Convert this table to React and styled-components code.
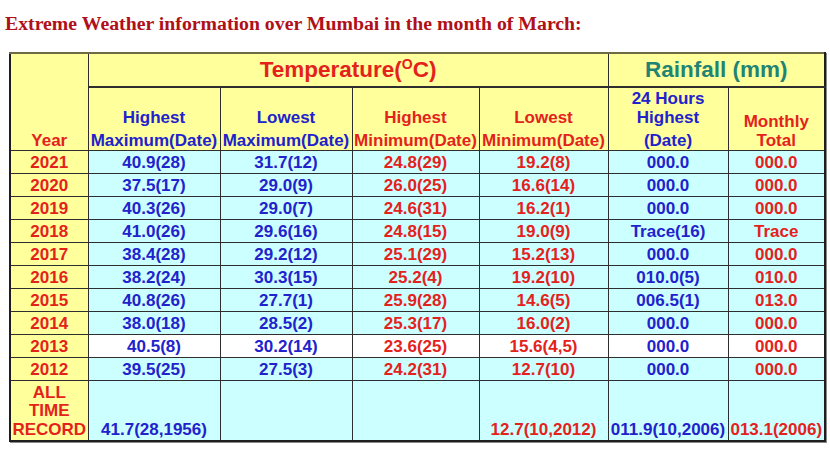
import React from 'react';
import styled, { createGlobalStyle } from 'styled-components';

const RED = '#e4221c';
const BLUE = '#2222cc';
const TEAL = '#1f8474';
const YELLOW = '#ffff9c';
const CYAN = '#ccffff';
const LINE = '#2e2e2e';

const rows = [
  ['2021', '40.9(28)', '31.7(12)', '24.8(29)', '19.2(8)', '000.0', '000.0'],
  ['2020', '37.5(17)', '29.0(9)', '26.0(25)', '16.6(14)', '000.0', '000.0'],
  ['2019', '40.3(26)', '29.0(7)', '24.6(31)', '16.2(1)', '000.0', '000.0'],
  ['2018', '41.0(26)', '29.6(16)', '24.8(15)', '19.0(9)', 'Trace(16)', 'Trace'],
  ['2017', '38.4(28)', '29.2(12)', '25.1(29)', '15.2(13)', '000.0', '000.0'],
  ['2016', '38.2(24)', '30.3(15)', '25.2(4)', '19.2(10)', '010.0(5)', '010.0'],
  ['2015', '40.8(26)', '27.7(1)', '25.9(28)', '14.6(5)', '006.5(1)', '013.0'],
  ['2014', '38.0(18)', '28.5(2)', '25.3(17)', '16.0(2)', '000.0', '000.0'],
  ['2013', '40.5(8)', '30.2(14)', '23.6(25)', '15.6(4,5)', '000.0', '000.0', true],
  ['2012', '39.5(25)', '27.5(3)', '24.2(31)', '12.7(10)', '000.0', '000.0'],
];

// colour of each value column, after the year
const tones = [BLUE, BLUE, RED, RED, BLUE, RED];

const GlobalStyle = createGlobalStyle`
  body {
    margin: 0;
    background: #fff;
    font-family: 'Liberation Sans', Arial, sans-serif;
  }
`;

const Page = styled.div`
  width: 830px;
  height: 455px;
  padding: 12px 0 0 5px;
  box-sizing: border-box;
`;

const Title = styled.h1`
  margin: 0 0 18px;
  font-family: 'Liberation Serif', 'Times New Roman', serif;
  font-weight: 700;
  font-size: 19.8px;
  line-height: 22px;
  color: #b01018;
`;

const Table = styled.table`
  margin-left: 4px;
  width: 815px;
  table-layout: fixed;
  border-collapse: collapse;
  border: 2px solid #1e1e1e;
  border-top-color: #6e6a44;
  font-weight: 700;
  font-size: 17px;
  text-align: center;
  box-shadow: 1px 1px 0 #8a8a8a;
`;

const Cell = styled.td`
  border: 1px solid ${LINE};
  padding: 0;
  white-space: nowrap;
  color: ${p => p.$tone || RED};
  background: ${p => (p.$yellow ? YELLOW : p.$white ? '#fff' : CYAN)};
  height: ${p => p.$h || 22}px;
  line-height: 19px;
  vertical-align: ${p => p.$align || 'middle'};
  overflow: visible;
`;

const GroupHead = styled.th`
  border: 1px solid ${LINE};
  border-bottom-width: 2px;
  background: ${YELLOW};
  color: ${p => p.$tone};
  font-size: 22.5px;
  height: 32px;
  padding: 0;
  vertical-align: middle;

  sup {
    font-size: 14px;
    vertical-align: 8px;
    line-height: 0;
  }
`;

const ColHead = styled.th`
  border: 1px solid ${LINE};
  background: ${YELLOW};
  color: ${p => p.$tone};
  height: 62px;
  padding: 0;
  vertical-align: bottom;
  white-space: nowrap;
  line-height: 19px;
  overflow: visible;
`;

const HeadLine = styled.div`
  margin-top: ${p => p.$gap || 0}px;
`;

const RecordLines = styled.div`
  line-height: 18.5px;
  padding-bottom: 1px;
`;

const head = [
  { lines: ['Highest', 'Maximum(Date)'], tone: BLUE, gap: 4.5 },
  { lines: ['Lowest', 'Maximum(Date)'], tone: BLUE, gap: 4.5 },
  { lines: ['Highest', 'Minimum(Date)'], tone: RED, gap: 4.5 },
  { lines: ['Lowest', 'Minimum(Date)'], tone: RED, gap: 4.5 },
  { lines: ['24 Hours', 'Highest', '(Date)'], tone: BLUE, gap: 4.5 },
  { lines: ['Monthly', 'Total'], tone: RED, gap: 0 },
];

export default function App() {
  return (
    <Page>
      <GlobalStyle />
      <Title>Extreme Weather information over Mumbai in the month of March:</Title>
      <Table>
        <colgroup>
          <col style={{ width: 78 }} />
          <col style={{ width: 132 }} />
          <col style={{ width: 132 }} />
          <col style={{ width: 127 }} />
          <col style={{ width: 129 }} />
          <col style={{ width: 120 }} />
          <col style={{ width: 97 }} />
        </colgroup>
        <thead>
          <tr>
            <ColHead rowSpan={2} $tone={RED}>Year</ColHead>
            <GroupHead colSpan={4} $tone={RED}>
              Temperature(<sup>O</sup>C)
            </GroupHead>
            <GroupHead colSpan={2} $tone={TEAL}>Rainfall (mm)</GroupHead>
          </tr>
          <tr>
            {head.map((h, i) => (
              <ColHead key={i} $tone={h.tone}>
                {h.lines.map((l, j) => (
                  <HeadLine key={j} $gap={j === h.lines.length - 1 ? h.gap : 0}>{l}</HeadLine>
                ))}
              </ColHead>
            ))}
          </tr>
        </thead>
        <tbody>
          {rows.map(r => (
            <tr key={r[0]}>
              <Cell $yellow $tone={RED}>{r[0]}</Cell>
              {r.slice(1, 7).map((v, i) => (
                <Cell key={i} $tone={tones[i]} $white={r[7]}>{v}</Cell>
              ))}
            </tr>
          ))}
          <tr>
            <Cell $yellow $tone={RED} $h={59} $align="bottom">
              <RecordLines>ALL<br />TIME<br />RECORD</RecordLines>
            </Cell>
            <Cell $tone={BLUE} $h={59} $align="bottom"><RecordLines>41.7(28,1956)</RecordLines></Cell>
            <Cell $h={59} />
            <Cell $h={59} />
            <Cell $tone={RED} $h={59} $align="bottom"><RecordLines>12.7(10,2012)</RecordLines></Cell>
            <Cell $tone={BLUE} $h={59} $align="bottom"><RecordLines>011.9(10,2006)</RecordLines></Cell>
            <Cell $tone={RED} $h={59} $align="bottom"><RecordLines>013.1(2006)</RecordLines></Cell>
          </tr>
        </tbody>
      </Table>
    </Page>
  );
}
